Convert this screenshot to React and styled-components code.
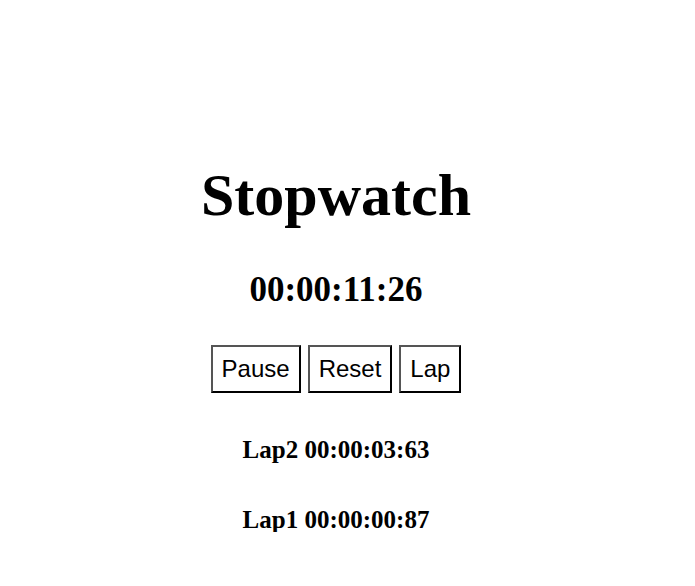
import React from "react";
import styled, { createGlobalStyle } from "styled-components";

const Global = createGlobalStyle`
  html, body { margin: 0; padding: 0; background: #fff; }
  body { font-family: "Liberation Serif", "Times New Roman", serif; color: #000; }
`;

const Page = styled.div`
  width: 672px;
  padding-top: 165px;
  display: flex;
  flex-direction: column;
  align-items: center;
  text-align: center;
`;

const Title = styled.h1`
  margin: 0;
  font-size: 60px;
  line-height: 60px;
  font-weight: bold;
`;

const Time = styled.h2`
  margin: 47px 0 0;
  font-size: 35px;
  line-height: 35px;
  font-weight: bold;
`;

const Controls = styled.div`
  margin-top: 38px;
  display: flex;
  gap: 7px;
`;

const Button = styled.button`
  font-family: "Liberation Sans", Arial, sans-serif;
  font-size: 24px;
  line-height: 28px;
  padding: 8px 9px;
  border-width: 2px;
  border-style: solid;
  border-color: #555 #000 #000 #555;
  background: #fff;
  color: #000;
  border-radius: 0;
  cursor: pointer;
`;

const LapList = styled.div`
  display: flex;
  flex-direction: column;
  align-items: center;
  margin-top: 44px;
  gap: 45px;
`;

const LapRow = styled.h3`
  margin: 0;
  font-size: 25px;
  line-height: 25px;
  font-weight: bold;
`;

const laps = [
  { name: "Lap2", time: "00:00:03:63" },
  { name: "Lap1", time: "00:00:00:87" },
];

export default function App() {
  return (
    <>
      <Global />
      <Page>
        <Title>Stopwatch</Title>
        <Time>00:00:11:26</Time>
        <Controls>
          <Button>Pause</Button>
          <Button>Reset</Button>
          <Button>Lap</Button>
        </Controls>
        <LapList>
          {laps.map((l) => (
            <LapRow key={l.name}>
              {l.name} {l.time}
            </LapRow>
          ))}
        </LapList>
      </Page>
    </>
  );
}
